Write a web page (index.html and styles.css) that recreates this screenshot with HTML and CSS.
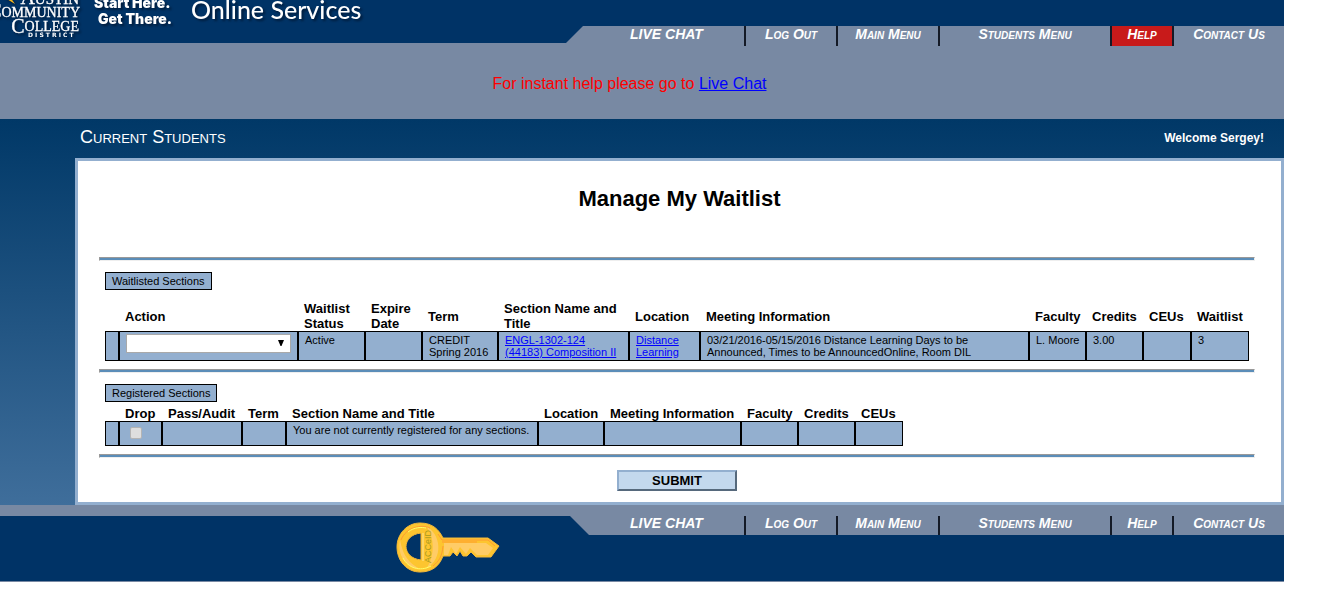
FILE: index.html
```html
<!DOCTYPE html>
<html lang="en">
<head>
<meta charset="utf-8">
<title>Manage My Waitlist</title>
<link rel="stylesheet" href="styles.css">
</head>
<body>
<div class="page">
  <header class="masthead">
    <svg class="brand" width="400" height="43" viewBox="0 0 400 43" role="img" aria-label="Austin Community College District, Online Services">
      <g class="brand-shadow">
        <path d="M2 -4L15 4L8 -6Z" fill="#f5b81c"/>
        <g class="brand-serif" text-anchor="end">
          <text x="79" y="4" font-size="15"><tspan font-size="20">A</tspan>USTIN</text>
          <text x="80" y="17" font-size="14"><tspan font-size="18">C</tspan>OMMUNITY</text>
          <text x="79" y="31" font-size="14"><tspan font-size="20" dy="2">C</tspan><tspan dy="-2">OLLEGE</tspan></text>
        </g>
        <text class="brand-sans" x="28" y="37" font-size="6">D I S T R I C T</text>
        <g class="brand-slogan">
          <text x="94" y="8">Start Here.</text>
          <text x="98" y="24">Get There.</text>
        </g>
        <text class="brand-service" x="191" y="19">Online Services</text>
      </g>
    </svg>
    <nav class="tabs tabs-top">
      <a class="tab tab-chat" href="#">LIVE CHAT</a>
      <a class="tab tab-logout" href="#">Log Out</a>
      <a class="tab tab-main" href="#">Main Menu</a>
      <a class="tab tab-students" href="#">Students Menu</a>
      <a class="tab tab-help active" href="#">Help</a>
      <a class="tab tab-contact" href="#">Contact Us</a>
    </nav>
  </header>
  <p class="notice">For instant help please go to <a href="#">Live Chat</a></p>

  <main class="body">
    <div class="titlebar">
      <span class="area">Current Students</span>
      <span class="welcome">Welcome Sergey!</span>
    </div>
    <form class="card">
      <h1>Manage My Waitlist</h1>
      <hr>
      <section class="block">
        <h2 class="tag">Waitlisted Sections</h2>
        <table class="grid waitlisted">
          <colgroup><col class="w14"><col class="w179"><col class="w67"><col class="w57"><col class="w76"><col class="w131"><col class="w71"><col><col class="w57"><col class="w57"><col class="w48"><col class="w58"></colgroup>
          <thead>
            <tr><td></td><th>Action</th><th>Waitlist Status</th><th>Expire Date</th><th>Term</th><th>Section Name and Title</th><th>Location</th><th>Meeting Information</th><th>Faculty</th><th>Credits</th><th>CEUs</th><th>Waitlist</th></tr>
          </thead>
          <tbody>
            <tr>
              <td></td>
              <td><span class="select"><select aria-label="Action"><option></option></select><svg width="6" height="7" viewBox="0 0 6 7" aria-hidden="true"><path d="M0 0H6L3.5 6H2.5Z"/></svg></span></td>
              <td>Active</td><td></td><td>CREDIT Spring 2016</td>
              <td class="section-name"><a href="#">ENGL-1302-124 (44183) Composition II</a></td>
              <td><a href="#">Distance Learning</a></td>
              <td><div class="meeting">03/21/2016-05/15/2016 Distance Learning Days to be Announced, Times to be AnnouncedOnline, Room DIL</div></td>
              <td>L. Moore</td><td>3.00</td><td></td><td>3</td>
            </tr>
          </tbody>
        </table>
      </section>
      <hr>
      <section class="block">
        <h2 class="tag">Registered Sections</h2>
        <table class="grid registered">
          <colgroup><col class="w14"><col class="w43"><col class="w80"><col class="w44"><col class="w252"><col class="w66"><col class="w137"><col class="w57"><col class="w57"><col class="w48"></colgroup>
          <thead>
            <tr><td></td><th>Drop</th><th>Pass/Audit</th><th>Term</th><th>Section Name and Title</th><th>Location</th><th>Meeting Information</th><th>Faculty</th><th>Credits</th><th>CEUs</th></tr>
          </thead>
          <tbody>
            <tr><td></td><td><input type="checkbox" aria-label="Drop"></td><td></td><td></td><td>You are not currently registered for any sections.</td><td></td><td></td><td></td><td></td><td></td></tr>
          </tbody>
        </table>
      </section>
      <hr>
      <button class="submit" type="button">SUBMIT</button>
    </form>
  </main>

  <footer class="footer">
    <svg class="key" width="104" height="52" viewBox="0 0 104 52" role="img" aria-label="ACCeID">
      <path fill="#fdc52f" stroke="#f3b73a" fill-rule="evenodd" d="M24 1C37 1 43 8 47 16H92L103 24L95 35H80L75 30L71 34L67 34L64 29L61 34L57 30L54 34H47C43 45 35 50 24 50C11 50 1 39 1 25C1 12 11 1 24 1ZM25 11C5 13 5 36 25 38Z"/>
      <path fill="#ffcc66" d="M30 4C45 12 48 36 30 47C39 35 39 15 30 4ZM4 18C1 33 10 46 24 47C13 41 7 34 4 18Z"/>
      <path fill="#ffcc66" d="M48 21H90L97 26L92 33H81L74 26L70 32L64 25L60 32L55 25L52 33H48Z"/>
      <path fill="none" stroke="#ff9933" d="M5 18C10 5 26 2 34 6M42 12L46 18H92L99 24M46 20H81M47 24C46 35 43 39 37 44"/>
      <path fill="none" stroke="#ffff66" d="M7 36C12 46 24 50 35 44M12 10C18 5 26 5 30 6"/>
      <path fill="none" stroke="#ffe599" d="M27 11V39"/>
      <text class="key-label" transform="translate(35 41) rotate(-90)">ACCeID</text>
    </svg>
    <nav class="tabs tabs-bottom">
      <a class="tab tab-chat" href="#">LIVE CHAT</a>
      <a class="tab tab-logout" href="#">Log Out</a>
      <a class="tab tab-main" href="#">Main Menu</a>
      <a class="tab tab-students" href="#">Students Menu</a>
      <a class="tab tab-help" href="#">Help</a>
      <a class="tab tab-contact" href="#">Contact Us</a>
    </nav>
  </footer>
</div>
</body>
</html>
```
FILE: styles.css
```css
* { box-sizing: border-box; }
body { margin: 0; background: #fff; color: #000; font-family: "Liberation Sans", Arial, sans-serif; }
a { color: #00f; }
.page { margin-right: 47px; }

.masthead { display: flex; justify-content: space-between; align-items: flex-start; height: 43px; background: #036; }
.brand { flex: none; fill: #fff; overflow: hidden; }
.brand-shadow { filter: drop-shadow(2px 2px 1px #001c3c); }
.brand-serif { font-family: "Liberation Serif", serif; stroke: #fff; stroke-width: 0.3px; }
.brand-sans { font-family: "DejaVu Sans", sans-serif; font-weight: bold; }
.brand-slogan { font: 900 14px Inter, sans-serif; }
.brand-service { font: 500 25px Lato, sans-serif; }

.tabs { display: flex; flex: none; background: #7889a3; }
.tabs-top { height: 20px; margin-top: 26px; clip-path: polygon(19px 0, 100% 0, 100% 100%, 0 100%, 0 17px, 2px 17px); }
.tabs-bottom { height: 19px; clip-path: polygon(6px 0, 100% 0, 100% 100%, 25px 100%); }
.tab { border-right: 2px solid #141a26; color: #fff; font-size: 14px; font-weight: bold; font-style: italic; font-variant: small-caps; line-height: 16px; text-align: center; text-decoration: none; }
.tabs-bottom .tab { line-height: 15px; }
.tab-chat { width: 182px; padding-left: 25px; }
.tab-logout { width: 92px; }
.tab-main { width: 102px; }
.tab-students { width: 172px; }
.tab-help { width: 62px; }
.tab-contact { width: 110px; border-right: 0; }
.tab.active { background: #c81a1a; }

.notice { margin: 0; padding: 31px 25px 26px 0; background: #7889a3; color: #f00; font-size: 16px; line-height: 19px; text-align: center; }

.body { padding-left: 75px; background: linear-gradient(#003867, #3f6e9b); }
.titlebar { display: flex; justify-content: space-between; align-items: center; height: 39px; padding: 0 20px 2px 5px; color: #fff; }
.area { font-size: 18px; font-variant: small-caps; }
.welcome { font-size: 12px; font-weight: bold; }

.card { display: flex; flex-direction: column; padding: 25px 26px 11px 21px; border: 3px solid #93afcf; background: #fff; }
h1 { margin: 0 0 45px; padding-left: 5px; font-size: 22px; line-height: 26px; text-align: center; }
hr { width: 100%; height: 4px; margin: 0; border: 1px solid; border-color: #999 #eee #eee #999; background: #5b8db8; }
.block { padding: 11px 6px 8px; }
.tag { width: fit-content; margin: 0; padding: 0 6px; border: 1px solid #000; background: #93afcf; font-size: 11px; font-weight: normal; line-height: 16px; }

.grid { table-layout: fixed; border-spacing: 0; text-align: left; }
.grid th { padding: 0 0 0 6px; font-size: 13px; line-height: 15px; }
.grid thead td { padding: 0; }
.grid tbody td { padding: 2px 0 2px 6px; border: 1px solid #000; background: #93afcf; font-size: 11px; line-height: 12px; vertical-align: top; }
.grid tbody .section-name { padding-right: 6px; }
.waitlisted { width: 100%; margin-top: 11px; }
.waitlisted tbody tr { height: 30px; }
.registered { width: 798px; margin-top: 4px; }
.registered tbody tr { height: 25px; }
.meeting { max-width: 290px; }
.w14 { width: 14px; } .w43 { width: 43px; } .w44 { width: 44px; } .w48 { width: 48px; }
.w57 { width: 57px; } .w58 { width: 58px; } .w66 { width: 66px; } .w67 { width: 67px; }
.w71 { width: 71px; } .w76 { width: 76px; } .w80 { width: 80px; } .w131 { width: 131px; }
.w137 { width: 137px; } .w179 { width: 179px; } .w252 { width: 252px; }

.select { display: flex; align-items: center; width: 165px; height: 19px; border: 1px solid #a9a9a9; background: #fff; }
.select select { appearance: none; flex: 1; align-self: stretch; min-width: 0; padding: 0; border: 0; background: transparent; }
.select svg { margin-right: 6px; pointer-events: none; }
input[type="checkbox"] { appearance: none; display: block; width: 12px; height: 12px; margin: 3px 4px; border: 1px solid #b4b4b4; border-radius: 2px; background: #dedede; }
.submit { align-self: center; width: 120px; height: 21px; margin-top: 12px; padding: 0; border: 2px solid; border-color: #93afcf #56697c #56697c #93afcf; background: #c3d8ed; color: #000; font: bold 13px/17px "Liberation Sans", Arial, sans-serif; }

.footer { display: flex; justify-content: space-between; align-items: flex-start; height: 77px; border-top: 11px solid #7889a3; border-bottom: 1px solid #7889a3; background: #036; }
.key { flex: none; margin: 6px 0 0 396px; }
.key-label { fill: #a89a20; font: 9px "Liberation Sans", sans-serif; }
```
